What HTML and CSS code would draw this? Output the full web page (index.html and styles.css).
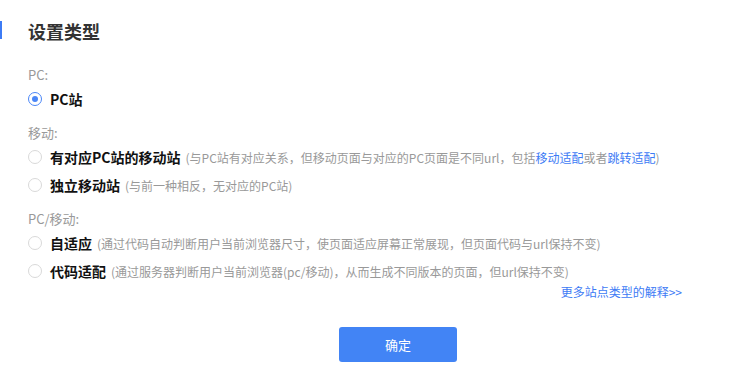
FILE: index.html
```html
<!DOCTYPE html>
<html lang="zh-CN">
<head>
  <meta charset="UTF-8" />
  <title>设置类型</title>
  <link rel="stylesheet" href="styles.css">
</head>
<body>
  <div class="panel">
    <h2 class="title">设置类型</h2>

    <div class="group">
      <div class="group-label">PC:</div>
      <label class="option">
        <span class="radio checked"></span>
        <span class="name">PC站</span>
      </label>
    </div>

    <div class="group">
      <div class="group-label">移动:</div>
      <label class="option">
        <span class="radio"></span>
        <span class="name">有对应PC站的移动站</span>
        <span class="desc">(与PC站有对应关系，但移动页面与对应的PC页面是不同url，包括<a href="#">移动适配</a>或者<a href="#">跳转适配</a>)</span>
      </label>
      <label class="option">
        <span class="radio"></span>
        <span class="name">独立移动站</span>
        <span class="desc">(与前一种相反，无对应的PC站)</span>
      </label>
    </div>

    <div class="group">
      <div class="group-label">PC/移动:</div>
      <label class="option">
        <span class="radio"></span>
        <span class="name">自适应</span>
        <span class="desc">(通过代码自动判断用户当前浏览器尺寸，使页面适应屏幕正常展现，但页面代码与url保持不变)</span>
      </label>
      <label class="option">
        <span class="radio"></span>
        <span class="name">代码适配</span>
        <span class="desc">(通过服务器判断用户当前浏览器(pc/移动)，从而生成不同版本的页面，但url保持不变)</span>
      </label>
    </div>

    <div class="more"><a href="#">更多站点类型的解释&gt;&gt;</a></div>

    <button class="ok-btn">确定</button>
  </div>
</body>
</html>
```

FILE: styles.css
```css
body {
  margin: 0;
  font-family: "Noto Sans CJK SC", "Noto Sans", sans-serif;
  background-color: #fff;
  color: #333;
}
a {
  color: #3d7bf5;
  text-decoration: none;
}
.panel {
  width: 654px;
  padding: 19px 0 0 28px;
}
.title {
  position: relative;
  margin: 0;
  font-size: 18px;
  line-height: 24px;
  font-weight: bold;
  color: #333;
}
.title::before {
  content: "";
  position: absolute;
  left: -28px;
  top: 2px;
  width: 2px;
  height: 18px;
  background-color: #3d7bf5;
}
.group {
  margin-top: 22px;
}
.group + .group {
  margin-top: 10px;
}
.group-label {
  font-size: 13px;
  line-height: 20px;
  color: #999;
}
.option {
  display: flex;
  align-items: center;
  height: 28px;
  cursor: pointer;
}
.radio {
  box-sizing: border-box;
  width: 14px;
  height: 14px;
  margin-right: 8px;
  border: 1px solid #d9d9d9;
  border-radius: 50%;
  display: flex;
  align-items: center;
  justify-content: center;
}
.radio.checked {
  border-color: #4a86f7;
}
.radio.checked::after {
  content: "";
  width: 6px;
  height: 6px;
  border-radius: 50%;
  background-color: #4a86f7;
}
.name {
  font-size: 14px;
  font-weight: bold;
  color: #111;
}
.desc {
  margin-left: 5px;
  font-size: 12px;
  color: #999;
}
.more {
  margin-top: -1px;
  text-align: right;
  font-size: 12px;
  line-height: 16px;
}
.ok-btn {
  display: block;
  margin: 27px 0 0 311px;
  width: 118px;
  height: 35px;
  border: none;
  border-radius: 3px;
  background-color: #4284f5;
  color: #fff;
  font-family: inherit;
  font-size: 13px;
  cursor: pointer;
}
```
